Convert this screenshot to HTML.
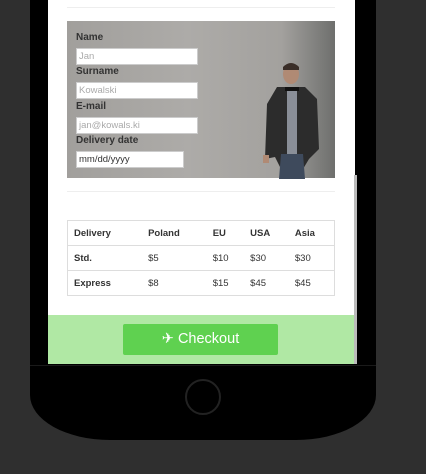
<!DOCTYPE html>
<html><head><style>
body{margin:0;width:426px;height:474px;background:#2f2f2f;position:relative;overflow:hidden;font-family:"Liberation Sans",sans-serif}
.phone{position:absolute;left:30px;top:-40px;width:346px;height:480px;background:#000;border-radius:0 0 80px 80px/0 0 45px 45px}
.screen{position:absolute;left:48px;top:0;width:307px;height:364px;background:#fff;overflow:hidden}
.sb{position:absolute;left:354px;top:175px;width:3px;height:189px;background:#bbb}
.line{position:absolute;left:30px;top:365px;width:346px;height:1px;background:#1a1a1a}
.hr{position:absolute;left:19px;width:268px;height:1px;background:#eee}
.img{position:absolute;left:19px;top:21px;width:268px;height:157px;background:linear-gradient(90deg,#a19f9c 0%,#adaba8 45%,#a3a19e 80%,#6e6f6d 100%)}
.lbl{position:absolute;left:9px;font-size:10px;font-weight:bold;color:#333}
.in{position:absolute;left:9px;background:#fff;border:1px solid #ccc;font-size:9.5px;color:#aaa;line-height:15px;padding-left:2px;box-sizing:border-box;width:122px;height:17px}
table{position:absolute;left:19px;top:220px;width:268px;border-collapse:collapse;font-size:9.5px;color:#333;border:1px solid #ddd}
td{height:24px;border-top:1px solid #ddd;padding:0 0 0 6px}
tr:first-child td,td.b{font-weight:bold}
.green{position:absolute;left:0;top:315px;width:307px;height:49px;background:#b0e8a4}
.btn{position:absolute;left:75px;top:9px;width:155px;height:31px;background:#5fd150;border-radius:2px;color:#fff;font-size:14.5px;text-align:center;line-height:31px}
.home{position:absolute;left:185px;top:379px;border:2px solid #222;border-radius:50%;box-sizing:border-box;width:36px;height:36px}
</style></head><body>
<div class="phone"></div>
<div class="line"></div>
<div class="home"></div>
<div class="screen">
<div class="hr" style="top:7px"></div>
<div class="img">
<div class="lbl" style="top:11px">Name</div>
<div class="in" style="top:27px">Jan</div>
<div class="lbl" style="top:45px">Surname</div>
<div class="in" style="top:61px">Kowalski</div>
<div class="lbl" style="top:80px">E-mail</div>
<div class="in" style="top:96px">jan@kowals.ki</div>
<div class="lbl" style="top:114px">Delivery date</div>
<div class="in" style="top:130px;width:108px;color:#333">mm/dd/yyyy</div>
<svg style="position:absolute;left:190px;top:38px" width="70" height="120">
<ellipse cx="34" cy="15" rx="8" ry="10" fill="#b08a74"/>
<path d="M26 8 Q34 0 42 8 L42 11 L26 11Z" fill="#3a2e28"/>
<path d="M20 28 L48 28 L60 40 L62 90 L52 100 L46 110 L24 110 L18 98 L8 100 L10 45 Z" fill="#2c2c2c"/>
<rect x="30" y="30" width="10" height="65" fill="#8a8f98"/>
<rect x="28" y="28" width="14" height="4" fill="#111"/>
<path d="M24 95 L46 95 L48 120 L22 120Z" fill="#3e4a5c"/>
<rect x="6" y="96" width="6" height="8" fill="#b08a74"/>
</svg>
</div>
<div class="hr" style="top:191px"></div>
<table>
<tr><td>Delivery</td><td>Poland</td><td>EU</td><td>USA</td><td>Asia</td></tr>
<tr><td class="b">Std.</td><td>$5</td><td>$10</td><td>$30</td><td>$30</td></tr>
<tr><td class="b">Express</td><td>$8</td><td>$15</td><td>$45</td><td>$45</td></tr>
</table>
<div class="green"><div class="btn">✈ Checkout</div></div>
</div>
<div class="sb"></div>
</body></html>
